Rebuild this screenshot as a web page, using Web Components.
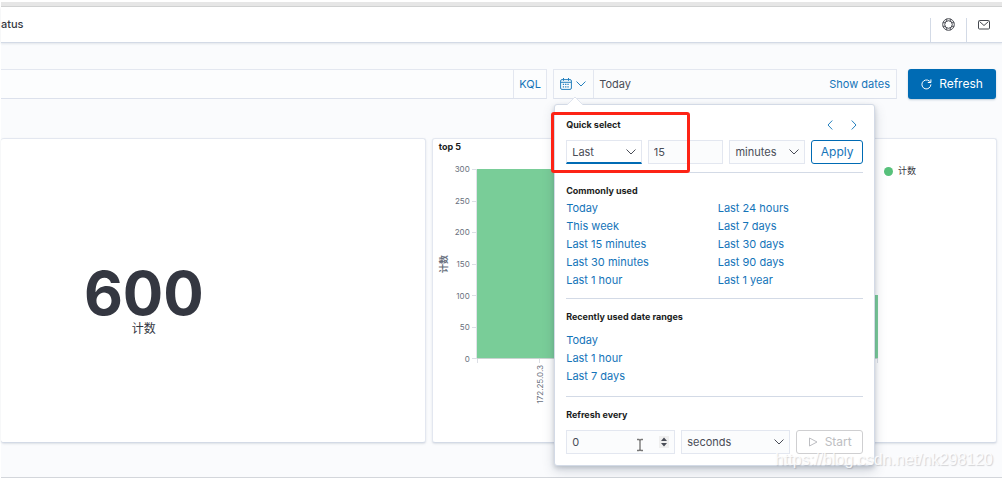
<!DOCTYPE html>
<html lang="en">
<head>
<meta charset="utf-8">
<title>Dashboard</title>
<style>
html { height: 100%; background: #fff; }
body { margin: 0; min-height: 100%; font: 11px/18px Inter, "Noto Sans CJK SC", sans-serif; color: #343741;
  --blue: #006bb4; --link: #1474b9; --line: #e3e7f0; --edge: #d3dae6; --field: #fbfcfd; --page: #fafbfd; --dark: #1a1c21; }
</style>
</head>
<body>
<dash-app></dash-app>
<script>
const define = (name, html, init) => {
  const template = document.createElement('template');
  template.innerHTML = `<style>*{box-sizing:border-box}:host{display:block;box-sizing:border-box}
    button,input,select{font:inherit;color:inherit;margin:0;border:0;background:none;padding:0;outline:0;border-radius:0}
    a{color:var(--link);text-decoration:none}svg{display:block}</style>${html}`;
  customElements.define(name, class extends HTMLElement {
    constructor() {
      super();
      this.attachShadow({ mode: 'open' }).append(template.content.cloneNode(true));
      if (init) init.call(this, this.shadowRoot);
    }
  });
};

define('ui-select', `<style>
  :host{position:relative;height:24px;min-width:0}
  select{appearance:none;width:100%;height:100%;padding:0 24px 0 5px;border:1px solid var(--line);background:var(--field);color:#4a4d57}
  :host([focused]) select{background:#fff;border-bottom:2px solid var(--blue)}
  svg{position:absolute;right:6px;top:7px;pointer-events:none}
  </style><select></select>
  <svg width="10" height="10" viewBox="0 0 10 10" fill="none" stroke="#4a4d57" stroke-linecap="round"><path d="M.8 2.8 5 7 9.2 2.8"/></svg>`,
  function (root) {
    const select = root.querySelector('select');
    select.setAttribute('aria-label', this.getAttribute('label'));
    select.add(new Option(this.getAttribute('value')));
  });

define('ui-number', `<style>
  :host{position:relative;height:24px;min-width:0}
  input{appearance:textfield;width:100%;height:100%;padding:0 6px 0 5px;border:1px solid var(--line);background:var(--field);color:#4a4d57}
  input::-webkit-inner-spin-button{appearance:none}
  svg{display:none;position:absolute;right:6px;top:6px}
  :host([stepper]) svg{display:block}
  </style><input type="number">
  <svg width="10" height="12" viewBox="0 0 10 12"><path fill="#efefef" d="M0 0h10v12H0z"/><path fill="#4a4d57" d="m2 5 3-3.4L8 5zm0 2h6L5 10.4z"/></svg>`,
  function (root) {
    const input = root.querySelector('input');
    input.setAttribute('aria-label', this.getAttribute('label'));
    input.value = this.getAttribute('value');
  });

define('ui-section', `<style>
  :host{border-top:1px solid var(--edge)}
  h2{margin:0;font-size:9px;line-height:12px;font-weight:700;color:var(--dark)}
  </style><h2><slot name="title"></slot></h2><slot></slot>`);

define('time-popover', `<style>
  :host{background:#fff;border:1px solid var(--edge);border-radius:3px;padding:12px 11px 11px;box-shadow:0 5px 12px rgba(65,78,101,.22),0 2px 4px rgba(65,78,101,.2)}
  .arrow{position:absolute;left:12px;top:-8px}
  header{display:flex;justify-content:space-between;align-items:center;height:16px}
  h2{margin:0;font-size:9px;font-weight:700;color:var(--dark)}
  nav{display:flex;gap:14px;padding-right:4px}
  nav button{width:10px;height:10px}
  .quick{display:grid;grid-template-columns:1fr 1fr 1fr 52px;gap:6px;margin:7px 0 8px}
  .apply{border:1px solid var(--blue);border-radius:3px;color:var(--link);font-size:12px}
  .links{display:grid;grid-template-columns:1fr 1fr;column-gap:6px;grid-auto-flow:column;grid-template-rows:repeat(5,18px);padding:2px 0 9px}
  .recent{display:grid;padding:8px 0 11px}
  ui-section{padding-top:12px}
  .every{display:grid;grid-template-columns:1fr 1fr 67px;gap:6px;margin-top:9px}
  .start{display:flex;align-items:center;justify-content:center;gap:7px;border:1px solid #cfcfd1;border-radius:3px;color:#bdbec2;font-size:12px}
  .mark{position:absolute;left:-4px;top:7px;width:139px;height:61px;border:3px solid #fd2315;border-radius:3px}
  .cursor{position:absolute;left:81px;bottom:13px}
  </style>
  <svg class="arrow" width="16" height="9" viewBox="0 0 16 9"><path d="m0 8 8-8 8 8v1H0z" fill="#fff"/><path d="m0 8 8-8 8 8" fill="none" stroke="#dfe4ee"/></svg>
  <header><h2>Quick select</h2><nav>
    <button aria-label="Previous"><svg width="10" height="10" fill="none" stroke="#2580be" stroke-linecap="round"><path d="M7 .8 3 5l4 4.2"/></svg></button>
    <button aria-label="Next"><svg width="10" height="10" fill="none" stroke="#2580be" stroke-linecap="round"><path d="M3 .8 7 5 3 9.2"/></svg></button>
  </nav></header>
  <div class="quick"><ui-select focused label="Tense" value="Last"></ui-select><ui-number label="Amount" value="15"></ui-number><ui-select label="Unit" value="minutes"></ui-select><button class="apply">Apply</button></div>
  <ui-section><span slot="title">Commonly used</span><div class="links">
    <a href="#">Today</a><a href="#">This week</a><a href="#">Last 15 minutes</a><a href="#">Last 30 minutes</a><a href="#">Last 1 hour</a>
    <a href="#">Last 24 hours</a><a href="#">Last 7 days</a><a href="#">Last 30 days</a><a href="#">Last 90 days</a><a href="#">Last 1 year</a></div></ui-section>
  <ui-section><span slot="title">Recently used date ranges</span><div class="recent"><a href="#">Today</a><a href="#">Last 1 hour</a><a href="#">Last 7 days</a></div></ui-section>
  <ui-section><span slot="title">Refresh every</span><div class="every"><ui-number stepper label="Interval" value="0"></ui-number><ui-select label="Interval unit" value="seconds"></ui-select>
    <button class="start" disabled><svg width="10" height="10" fill="none" stroke="#bdbec2" stroke-linejoin="round"><path d="M1.5 1 9 5 1.5 9z"/></svg>Start</button></div></ui-section>
  <svg class="cursor" width="8" height="14" viewBox="0 0 8 14"><path d="M1 1.5h2l1 1 1-1h2M4 2v10M1 12.5h2l1-1 1 1h2" fill="none" stroke="#fff" stroke-width="3"/><path d="M1 1.5h2l1 1 1-1h2M4 2v10M1 12.5h2l1-1 1 1h2" fill="none" stroke="#777" stroke-width="1.4"/></svg>
  <div class="mark"></div>`);

define('date-picker', `<style>
  :host{display:flex;position:relative;height:30px;border:1px solid var(--line);border-bottom-color:#dce1ec;background:var(--field);min-width:0}
  .open{display:flex;align-items:center;gap:4px;width:40px;padding-left:6px;border-right:1px solid var(--line)}
  .range{flex:1;text-align:left;padding-left:5px;color:#4a4d57}
  .show{color:var(--link);padding-right:6px}
  time-popover{position:absolute;left:0;top:34px;width:321px;z-index:2}
  </style>
  <button class="open" aria-label="Date quick select"><svg width="12" height="12" viewBox="0 0 12 12" fill="none" stroke="#2580be"><rect x=".6" y="1.6" width="10.8" height="9.8" rx="1.4"/><path d="M.6 4.3h10.8M3.5 0v2.8M8.5 0v2.8"/><path stroke-width="1.2" stroke-dasharray="1.3 1" d="M2.8 6.4h6.8M2.8 8.9h6.8"/></svg>
  <svg width="10" height="10" fill="none" stroke="#2580be" stroke-linecap="round"><path d="M.8 2.8 5 7 9.2 2.8"/></svg></button>
  <button class="range">Today</button><button class="show">Show dates</button><time-popover></time-popover>`);

define('app-header', `<style>
  :host{display:flex;justify-content:space-between;position:relative;height:36px;background:#fff;border-bottom:1px solid var(--edge);box-shadow:0 1px 2px rgba(152,162,179,.25);font-weight:500}
  span{line-height:34px}
  div{display:flex;align-items:flex-end}
  button{width:36px;height:24px;border-left:1px solid var(--edge);padding:0 0 12px 11px}
  </style><span>atus</span><div>
  <button aria-label="Help"><svg width="13" height="13" viewBox="0 0 13 13" fill="none" stroke="#45484f"><circle cx="6.5" cy="6.5" r="5.8"/><circle cx="6.5" cy="6.5" r="3.8"/><path d="M4.6.9v2.8M8.4.9v2.8M4.6 9.3v2.8M8.4 9.3v2.8M.9 4.6h2.8M.9 8.4h2.8M9.3 4.6h2.8M9.3 8.4h2.8" stroke-width=".8"/></svg></button>
  <button aria-label="Newsfeed"><svg width="12" height="13" viewBox="0 0 12 13" fill="none" stroke="#45484f"><rect x=".5" y="2.5" width="11" height="8.5" rx="1"/><path d="m1.5 3.5 4.5 4 4.5-4"/></svg></button></div>`);

define('query-bar', `<style>
  :host{display:flex;align-items:flex-start;padding:26px 6px 0 0}
  .search{flex:547 1 0;display:flex;height:30px;border:1px solid var(--line);border-left:0;border-bottom-color:#dce1ec;background:#fcfdfe}
  .search input{flex:1;min-width:0}
  .search button{width:33px;border-left:1px solid var(--line);color:var(--link)}
  date-picker{flex:343 1 0;margin:0 11px 0 6px}
  .refresh{display:flex;align-items:center;justify-content:center;gap:7px;width:88px;height:30px;background:var(--blue);color:#fff;border-radius:3px;font-size:12px;box-shadow:0 1px 2px rgba(54,97,126,.3)}
  </style><div class="search"><input type="text" aria-label="Search"><button>KQL</button></div><date-picker></date-picker>
  <button class="refresh"><svg width="11" height="11" viewBox="0 0 11 11" fill="none" stroke="#fff" stroke-linecap="round"><path d="M9.9 5.8A4.5 4.5 0 1 1 8.4 2.1L9.6 3.3M9.9.8v2.7H7.2"/></svg>Refresh</button>`);

define('dash-panel', `<style>
  :host{background:#fff;border:1px solid var(--line);border-bottom-color:var(--edge);border-radius:3px;box-shadow:0 1px 2px rgba(152,162,179,.3);min-width:0}
  </style><slot></slot>`);

define('metric-view', `<style>
  :host{display:grid;justify-items:center;height:100%;padding:125px 138px 0 0;align-content:start}
  strong{font-size:60px;line-height:58px;color:#343741}
  span{font-size:12px;line-height:14px;color:#343741}
  </style><strong>600</strong><span>计数</span>`);

define('bar-chart', `<style>
  :host{font-size:8px;line-height:10px;color:#69707d}
  h2{margin:0;padding:2px 6px 0;font-size:9px;line-height:12px;color:var(--dark)}
  .body{display:grid;grid-template-columns:17px 20px 7px 1fr 118px;padding-top:16px}
  .name{writing-mode:vertical-rl;text-orientation:sideways;transform:rotate(180deg);justify-self:end;text-align:center;font-size:9px;line-height:12px;font-weight:700}
  .scale{display:flex;flex-direction:column;justify-content:space-between;text-align:right;margin:-5px 0}
  .ticks{display:flex;flex-direction:column;justify-content:space-between;padding-left:2px;height:190px;border-right:1px solid #e0e3e8}
  i{display:block;height:1px;background:#dcdfe5}
  .plot{display:flex;height:190px;justify-content:space-between;align-items:flex-end;border-bottom:1px solid #c9d3d0}
  .plot b{background:#79cd98;width:126px}
  .b1{height:189px}.b2{height:126px}.b3{height:63px}
  .legend{padding-left:6px;margin-top:-4px;display:flex;gap:5px;height:12px;align-items:center;font-size:9px;line-height:12px;color:#343741}
  .dot{width:9px;height:9px;border-radius:50%;background:#57c17b}
  .x{grid-column:4;display:flex;justify-content:space-between;border-left:1px solid #dcdfe5;border-right:1px solid #dcdfe5;height:4px}
  .x span{width:124px;display:grid;justify-items:center;grid-template-rows:4px auto;row-gap:2px}
  .x i{width:1px;height:4px}
  .x em{font-style:normal;writing-mode:vertical-rl;transform:rotate(180deg)}
  </style><h2>top 5</h2><div class="body"><div class="name">计数</div>
  <div class="scale"><span>300</span><span>250</span><span>200</span><span>150</span><span>100</span><span>50</span><span>0</span></div>
  <div class="ticks"><i></i><i></i><i></i><i></i><i></i><i></i><i></i></div>
  <div class="plot"><b class="b1"></b><b class="b2"></b><b class="b3"></b></div>
  <div class="legend"><span class="dot"></span>计数</div>
  <div class="x"><span><i></i><em>172.25.0.3</em></span></div></div>`);

define('dash-app', `<style>
  :host{position:relative;min-height:100vh;padding:2px 0 0 1px;background:#fff;overflow:hidden}
  .strip{height:5px;background:#e6e6e6;border-bottom:1px solid #d2d2d2}
  main{background:var(--page);min-height:calc(100vh - 43px);border-bottom:1px solid #d3d6db}
  .panels{display:flex;gap:6px;padding:39px 5px 34px 0}
  dash-panel{height:305px}
  .one{flex:425 1 0;border-left:0}.two{flex:565 1 0}
  .water{position:absolute;right:9px;bottom:9px;z-index:3;font:16px/18px "Liberation Sans",sans-serif;color:rgba(255,255,255,.85);text-shadow:1px 1px 1px rgba(90,90,100,.25);pointer-events:none}
  </style><div class="strip"></div><app-header></app-header>
  <main><query-bar></query-bar><div class="panels"><dash-panel class="one"><metric-view></metric-view></dash-panel><dash-panel class="two"><bar-chart></bar-chart></dash-panel></div></main>
  <div class="water">https://blog.csdn.net/nk298120</div>`);
</script>
</body>
</html>
